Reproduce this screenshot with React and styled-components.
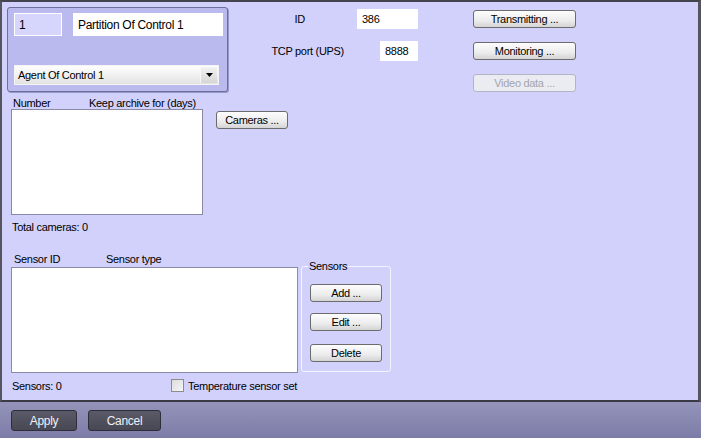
import React from "react";
import styled, { createGlobalStyle } from "styled-components";

const GlobalStyle = createGlobalStyle`
  html, body {
    margin: 0;
    padding: 0;
    background: #d1d1fc;
  }
  body {
    font-family: "Liberation Sans", Arial, sans-serif;
    font-size: 11px;
    letter-spacing: -0.3px;
    color: #000;
  }
`;

const Frame = styled.div`
  width: 701px;
  height: 438px;
  display: flex;
  flex-direction: column;
  box-sizing: border-box;
  overflow: hidden;
`;

const Panel = styled.div`
  flex: 1;
  display: flex;
  flex-direction: column;
  background: #d1d1fc;
  border-top: 2px solid #44444f;
  border-left: 2px solid #55555f;
  border-right: 3px solid #55555f;
  border-bottom: 2px solid #3a3a46;
`;

const TopRow = styled.div`
  display: flex;
  align-items: flex-start;
  margin: 5px 0 0 5px;
`;

const GroupBox = styled.div`
  width: 221px;
  height: 85px;
  box-sizing: border-box;
  padding: 5px 0 6px 6px;
  background: #babaee;
  border: 1px solid #6e6e9c;
  border-radius: 3px;
  box-shadow: 1px 1px 0 #9898c8;
  display: flex;
  flex-direction: column;
  justify-content: space-between;
`;

const InputRow = styled.div`
  display: flex;
  gap: 11px;
`;

const TextBox = styled.div`
  box-sizing: border-box;
  width: ${(p) => p.$w}px;
  height: ${(p) => p.$h || 20}px;
  padding: 0 0 0 4px;
  display: flex;
  align-items: center;
  background: ${(p) => (p.$tinted ? "#d6d6fc" : "#fff")};
  border: 1px solid #fff;
  font-size: ${(p) => (p.$big ? "12px" : "11px")};
`;

const Select = styled.div`
  box-sizing: border-box;
  width: 205px;
  height: 20px;
  display: flex;
  align-items: center;
  justify-content: space-between;
  padding: 0 1px 0 3px;
  background: linear-gradient(#ffffff, #e2e2e2);
  border: 1px solid #f4f4f4;
  font-size: 11px;
`;

const DropButton = styled.div`
  width: 16px;
  height: 16px;
  display: flex;
  align-items: center;
  justify-content: center;
  background: linear-gradient(#f2f2f2, #d6d6d6);
  border-left: 1px solid #f8f8f8;
`;

const MiddleCol = styled.div`
  width: 190px;
  margin-top: 2px;
  display: flex;
  flex-direction: column;
  align-items: flex-end;
  gap: 12px;
`;

const FieldRow = styled.div`
  display: flex;
  align-items: center;
  gap: ${(p) => p.$gap}px;
`;

const ButtonCol = styled.div`
  margin: 3px 0 0 55px;
  display: flex;
  flex-direction: column;
  gap: 14px;
`;

const Button = styled.div`
  box-sizing: border-box;
  width: ${(p) => p.$w}px;
  height: ${(p) => p.$h || 18}px;
  display: flex;
  align-items: center;
  justify-content: center;
  border-radius: 3px;
  border: 1px solid ${(p) => (p.$disabled ? "#b4b4c4" : "#6c6c6c")};
  background: ${(p) =>
    p.$disabled ? "#ebebf2" : "linear-gradient(#fdfdfd, #ececec 60%, #d4d4d4)"};
  color: ${(p) => (p.$disabled ? "#a4a4ac" : "#000")};
  font-size: 11px;
`;

const Section = styled.div`
  display: flex;
  align-items: flex-start;
  margin: ${(p) => p.$mt}px 0 0 9px;
`;

const ListCol = styled.div`
  display: flex;
  flex-direction: column;
  gap: ${(p) => p.$gap || 0}px;
`;

const ListHeader = styled.div`
  display: flex;
  line-height: 12px;
  height: 12px;
  padding-left: ${(p) => p.$pl}px;
`;

const HeaderCell = styled.span`
  width: ${(p) => p.$w}px;
`;

const ListBox = styled.div`
  box-sizing: border-box;
  width: ${(p) => p.$w}px;
  height: 106px;
  background: #fff;
  border: 1px solid #8a8aa6;
`;

const Caption = styled.div`
  line-height: 13px;
  margin-top: 6px;
  padding-left: 1px;
`;

const SideButton = styled(Button)`
  margin: 14px 0 0 13px;
`;

const Fieldset = styled.fieldset`
  box-sizing: border-box;
  width: 90px;
  height: 112px;
  margin: 7px 0 0 3px;
  padding: 0 0 0 8px;
  border: 1px solid #f4f4ff;
  border-radius: 3px;
  display: flex;
  flex-direction: column;
`;

const Legend = styled.legend`
  margin-left: -2px;
  padding: 0 1px;
  line-height: 13px;
`;

const FieldsetButtons = styled.div`
  margin-top: 11px;
  display: flex;
  flex-direction: column;
  gap: 11px;
  & > :last-child {
    margin-top: 2px;
  }
`;

const Footer = styled.div`
  display: flex;
  align-items: center;
  margin: 6px 0 0 10px;
  height: 13px;
`;

const FooterCount = styled.span`
  width: 159px;
`;

const CheckBox = styled.span`
  box-sizing: border-box;
  width: 13px;
  height: 13px;
  border: 1px solid #8c8c8c;
  background: linear-gradient(135deg, #dcdcdc, #f6f6f6);
  margin-right: 4px;
`;

const BottomBar = styled.div`
  height: 36px;
  box-sizing: border-box;
  padding: 8px 0 0 11px;
  display: flex;
  gap: 11px;
  background: linear-gradient(#9494ba, #7c7ca8);
`;

const DarkButton = styled.div`
  box-sizing: border-box;
  width: ${(p) => p.$w}px;
  height: 21px;
  display: flex;
  align-items: center;
  justify-content: center;
  border: 1px solid #2e2e3a;
  border-radius: 3px;
  background: linear-gradient(#5a5a68, #484854);
  color: #f0f0f6;
  font-size: 12px;
`;

const Arrow = () => (
  <svg width="7" height="4" viewBox="0 0 7 4">
    <path d="M0 0 H7 L3.5 4 Z" fill="#000" />
  </svg>
);

export default function App() {
  return (
    <>
      <GlobalStyle />
      <Frame>
        <Panel>
          <TopRow>
            <GroupBox>
              <InputRow>
                <TextBox $w={48} $h={23} $tinted $big>1</TextBox>
                <TextBox $w={150} $h={23} $big>Partition Of Control 1</TextBox>
              </InputRow>
              <Select>
                <span>Agent Of Control 1</span>
                <DropButton>
                  <Arrow />
                </DropButton>
              </Select>
            </GroupBox>
            <MiddleCol>
              <FieldRow $gap={52}>
                <span>ID</span>
                <TextBox $w={61}>386</TextBox>
              </FieldRow>
              <FieldRow $gap={36}>
                <span>TCP port (UPS)</span>
                <TextBox $w={38}>8888</TextBox>
              </FieldRow>
            </MiddleCol>
            <ButtonCol>
              <Button $w={103}>Transmitting ...</Button>
              <Button $w={103}>Monitoring ...</Button>
              <Button $w={103} $disabled>Video data ...</Button>
            </ButtonCol>
          </TopRow>

          <Section $mt={5}>
            <ListCol>
              <ListHeader $pl={2}>
                <HeaderCell $w={76}>Number</HeaderCell>
                <HeaderCell>Keep archive for (days)</HeaderCell>
              </ListHeader>
              <ListBox $w={192} />
              <Caption>Total cameras: 0</Caption>
            </ListCol>
            <SideButton $w={72}>Cameras ...</SideButton>
          </Section>

          <Section $mt={19}>
            <ListCol $gap={2}>
              <ListHeader $pl={3}>
                <HeaderCell $w={92}>Sensor ID</HeaderCell>
                <HeaderCell>Sensor type</HeaderCell>
              </ListHeader>
              <ListBox $w={287} />
            </ListCol>
            <Fieldset>
              <Legend>Sensors</Legend>
              <FieldsetButtons>
                <Button $w={72}>Add ...</Button>
                <Button $w={72}>Edit ...</Button>
                <Button $w={72}>Delete</Button>
              </FieldsetButtons>
            </Fieldset>
          </Section>

          <Footer>
            <FooterCount>Sensors: 0</FooterCount>
            <CheckBox />
            <span>Temperature sensor set</span>
          </Footer>
        </Panel>
        <BottomBar>
          <DarkButton $w={66}>Apply</DarkButton>
          <DarkButton $w={73}>Cancel</DarkButton>
        </BottomBar>
      </Frame>
    </>
  );
}
